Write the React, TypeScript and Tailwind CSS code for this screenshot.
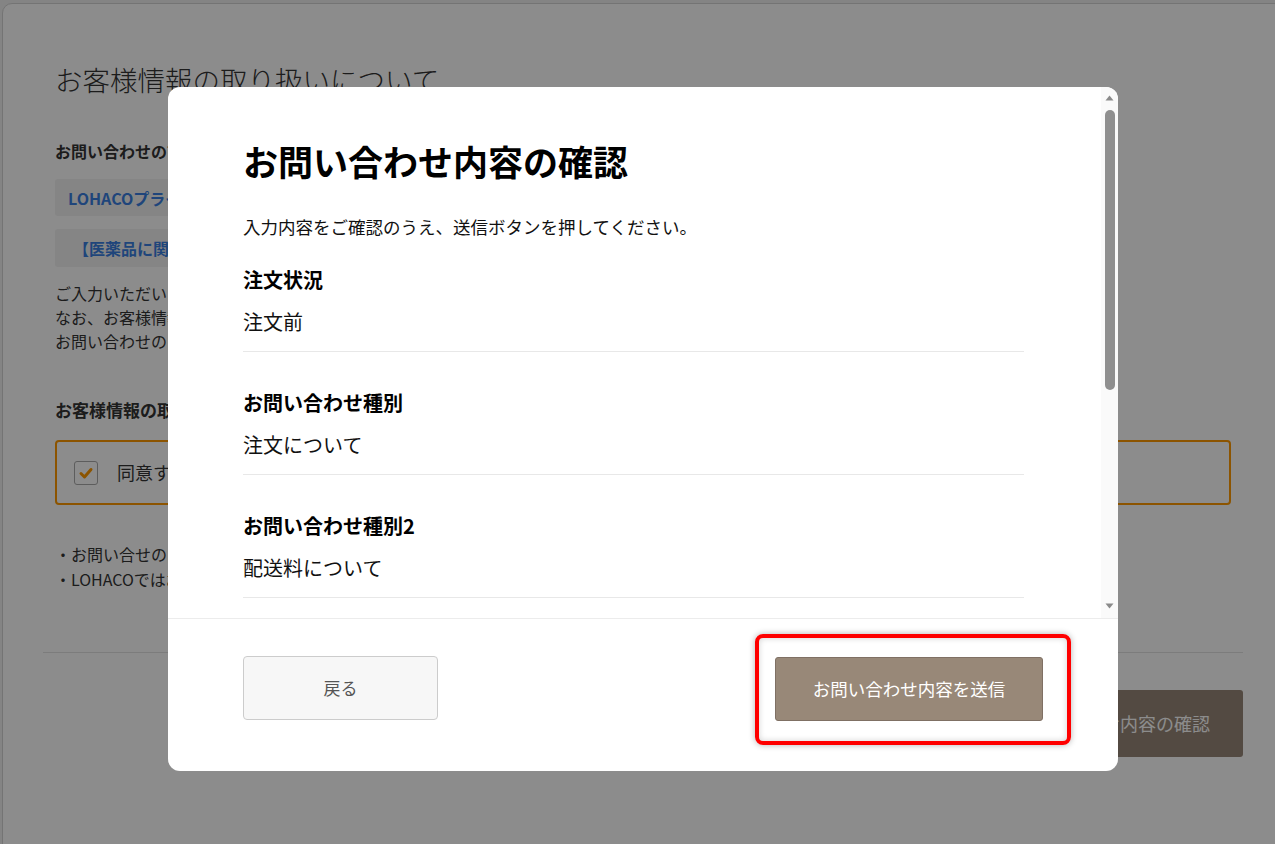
import React from "react";

const font = { fontFamily: '"Noto Sans CJK JP", "Noto Sans", sans-serif' };

function BackgroundPage() {
  return (
    <div className="min-h-[844px] bg-[#f0f0f0] pt-[3px] pl-[2px]">
      <div className="min-h-[900px] w-[1282px] rounded-[10px] border border-[#d4d4d4] bg-white px-[40px] pt-[55px]">
        <div className="px-[12px]">
          <h1 className="text-[27.5px] leading-[40px] font-light text-[#333]">お客様情報の取り扱いについて</h1>
          <p className="mt-[40px] text-[16px] leading-[24px] font-bold text-[#333]">お問い合わせの前に必ずご確認ください</p>
          <div className="mt-[16px] flex h-[37px] w-[560px] items-center rounded-[3px] bg-[#f2f2f2] px-[13px] text-[16px] font-bold text-[#3a7fe0]">
            LOHACOプライバシーポリシー
          </div>
          <div className="mt-[13px] flex h-[38px] w-[560px] items-center rounded-[3px] bg-[#f2f2f2] px-[18px] text-[16px] font-bold text-[#3a7fe0]">
            【医薬品に関するお問い合わせ】
          </div>
          <div className="mt-[14px] text-[16px] leading-[24px] text-[#333]">
            <p>ご入力いただいたお客様情報は、お問い合わせへの回答にのみ利用します。</p>
            <p>なお、お客様情報の取り扱いについては上記をご確認ください。</p>
            <p>お問い合わせの内容によっては回答にお時間をいただく場合があります。</p>
          </div>
          <p className="mt-[44px] text-[17px] leading-[26px] font-bold text-[#333]">お客様情報の取り扱いへの同意</p>
          <div className="mt-[17px] flex h-[65px] items-center gap-[19px] rounded-[4px] border-2 border-[#ff9a00] pl-[17px]">
            <div className="flex h-[24px] w-[24px] items-center justify-center rounded-[3px] border-[1.5px] border-[#aaa] bg-white">
              <svg width="16" height="16" viewBox="0 0 16 16">
                <path d="M3 8.5 L6.5 12 L13 4.5" fill="none" stroke="#ff9a00" strokeWidth="3" strokeLinecap="round" strokeLinejoin="round" />
              </svg>
            </div>
            <span className="text-[18px] text-[#333]">同意する</span>
          </div>
          <div className="mt-[37px] text-[16px] leading-[25px] text-[#333]">
            <p>・お問い合せの内容によっては回答できない場合があります。</p>
            <p>・LOHACOではお電話でのお問い合わせは受け付けておりません。</p>
          </div>
        </div>
        <div className="mt-[60px] border-t border-[#e2e2e2]" />
        <div className="mt-[37px] flex justify-end">
          <div className="flex h-[67px] w-[264px] items-center justify-center rounded-[3px] bg-[#978778] text-[18px] text-white">
            お問い合わせ内容の確認
          </div>
        </div>
      </div>
    </div>
  );
}

function Item({ label, value, first }: { label: string; value: string; first?: boolean }) {
  return (
    <div className={`${first ? "pt-[26px]" : "pt-[37px]"} border-b border-[#e8e8e8] pb-[14px]`}>
      <div className="text-[20px] leading-[28px] font-bold text-black">{label}</div>
      <div className="mt-[13px] text-[20px] leading-[30px] text-[#111]">{value}</div>
    </div>
  );
}

function Scrollbar() {
  return (
    <div className="flex w-[17px] flex-col items-center bg-[#fafafa] pt-[8px] pb-[9px]">
      <svg width="9" height="6" viewBox="0 0 9 6">
        <path d="M4.5 0.5 L8.5 5.5 L0.5 5.5 Z" fill="#8a8a8a" />
      </svg>
      <div className="mt-[9px] h-[280px] w-[10px] rounded-full bg-[#8f8f8f]" />
      <div className="flex-1" />
      <svg width="9" height="6" viewBox="0 0 9 6">
        <path d="M0.5 0.5 L8.5 0.5 L4.5 5.5 Z" fill="#8a8a8a" />
      </svg>
    </div>
  );
}

function Modal() {
  return (
    <div className="relative w-[950px] overflow-hidden rounded-[12px] bg-white">
      <div className="flex h-[531px]">
        <div className="flex-1 overflow-hidden pr-[77px] pl-[75px] pt-[50px]">
          <h2 className="text-[35px] leading-[48px] font-bold text-black">お問い合わせ内容の確認</h2>
          <p className="mt-[29px] text-[17.5px] leading-[26px] text-[#111]">入力内容をご確認のうえ、送信ボタンを押してください。</p>
          <Item first label="注文状況" value="注文前" />
          <Item label="お問い合わせ種別" value="注文について" />
          <Item label="お問い合わせ種別2" value="配送料について" />
        </div>
        <Scrollbar />
      </div>
      <div className="flex items-start justify-between border-t border-[#ececec] px-[75px] pt-[37px] pb-[50px]">
        <button className="flex h-[64px] w-[195px] items-center justify-center rounded-[4px] border border-[#cccccc] bg-[#f7f7f7] text-[17px] text-[#555]">
          戻る
        </button>
        <button className="mt-[1px] flex h-[64px] w-[268px] items-center justify-center rounded-[3px] border border-[#7f7064] bg-[#988878] text-[17.5px] text-white">
          お問い合わせ内容を送信
        </button>
      </div>
      <div className="pointer-events-none absolute top-[547px] left-[587px] h-[111px] w-[316px] rounded-[8px] border-4 border-[#ff0000] shadow-[0_0_6px_rgba(0,0,0,0.3),inset_0_0_6px_rgba(0,0,0,0.18)]" />
    </div>
  );
}

export default function App() {
  return (
    <div style={font} className="relative h-[844px] w-[1275px] overflow-hidden">
      <BackgroundPage />
      <div className="fixed inset-0 bg-black/45 pt-[87px] pl-[168px]">
        <Modal />
      </div>
    </div>
  );
}
